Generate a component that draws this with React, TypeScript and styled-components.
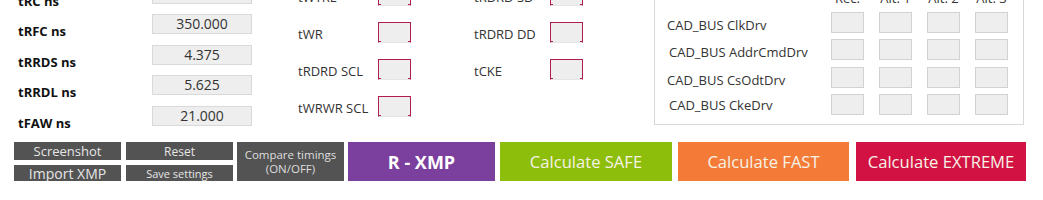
import { FunctionComponent } from "react";
import styled, { createGlobalStyle } from "styled-components";

const GlobalStyle = createGlobalStyle`
  html, body {
    margin: 0;
    padding: 0;
    background: #ffffff;
    overflow: hidden;
  }
  body {
    font-family: "Open Sans", "Noto Sans", "Liberation Sans", sans-serif;
    color: #333;
  }
`;

const Page = styled.div`
  width: 1043px;
  height: 200px;
  overflow: hidden;
  background: #fff;
`;

const Top = styled.div`
  display: flex;
  align-items: flex-start;
  height: 142px;
  overflow: hidden;
`;

/* left column: bold timings with values */
const MainTimings = styled.div`
  display: grid;
  grid-template-columns: 134px 100px;
  grid-auto-rows: 20px;
  row-gap: 10.4px;
  margin-left: 18px;
  margin-top: -16px;
`;

const BoldLabel = styled.div`
  align-self: end;
  margin-bottom: -5px;
  font-size: 13px;
  font-weight: 700;
  color: #111;
  line-height: 16px;
  white-space: nowrap;
`;

const ValueBox = styled.div`
  box-sizing: border-box;
  height: 20px;
  background: #eeeeee;
  border: 1px solid #d9d9d9;
  font-size: 14px;
  line-height: 18px;
  text-align: center;
  color: #333;
`;

/* middle columns: small timings with red boxes */
const SubTimings = styled.div<{ $gap: number; $label: number }>`
  display: grid;
  grid-template-columns: ${(p) => p.$label}px 33px;
  grid-auto-rows: 21px;
  row-gap: 16px;
  margin-left: ${(p) => p.$gap}px;
  margin-top: -15px;
  align-items: center;
`;

const Label = styled.div`
  font-size: 13px;
  color: #333;
  white-space: nowrap;
  line-height: 16px;
  margin-top: 3px;
`;

const RedBox = styled.div`
  box-sizing: border-box;
  height: 21px;
  width: 33px;
  background:
    linear-gradient(#b01d52, #b01d52) left bottom / 2px 1px no-repeat,
    linear-gradient(#b01d52, #b01d52) right bottom / 2px 1px no-repeat,
    #eeeeee;
  border: 1px solid #b01d52;
  border-bottom: 1px solid #e6e6e6;
`;

/* right panel: CAD_BUS drive strengths */
const Panel = styled.div`
  box-sizing: border-box;
  margin-left: 71px;
  margin-top: -12px;
  width: 370px;
  height: 137px;
  border: 1px solid #d8d8d8;
  padding: 2px 0 0 12px;
  display: grid;
  grid-template-columns: 149px repeat(4, 33px);
  grid-template-rows: 14px repeat(4, 21px);
  column-gap: 15px;
  row-gap: 6.6px;
  align-items: center;
  align-content: start;
`;

const ColHead = styled.div`
  font-size: 13px;
  color: #333;
  text-align: center;
  white-space: nowrap;
  line-height: 16px;
`;

const BusLabel = styled.div<{ $indent: number; $dy: number }>`
  font-size: 13px;
  color: #333;
  white-space: nowrap;
  padding-left: ${(p) => p.$indent}px;
  line-height: 16px;
  margin-top: ${(p) => p.$dy}px;
`;

const GreyBox = styled.div`
  box-sizing: border-box;
  height: 21px;
  background: #eeeeee;
  border: 1px solid #d2d2d2;
`;

/* bottom toolbar */
const Toolbar = styled.div`
  display: flex;
  align-items: flex-start;
  height: 39px;
  margin-left: 14px;
  overflow: hidden;
`;

const Stack = styled.div<{ $ml: number }>`
  display: flex;
  flex-direction: column;
  gap: 5px;
  width: 107px;
  margin-left: ${(p) => p.$ml}px;
`;

const SmallButton = styled.div<{ $h: number; $size: number }>`
  height: ${(p) => p.$h}px;
  background: #535353;
  color: #e6e6e6;
  font-size: ${(p) => p.$size}px;
  line-height: ${(p) => p.$h + 1}px;
  text-align: center;
  overflow: hidden;
  white-space: nowrap;
`;

const BigButton = styled.div<{ $w: number; $ml: number; $bg: string; $bold?: boolean }>`
  display: flex;
  align-items: center;
  justify-content: center;
  width: ${(p) => p.$w}px;
  height: 39px;
  margin-left: ${(p) => p.$ml}px;
  background: ${(p) => p.$bg};
  color: ${(p) => (p.$bold ? "#ffffff" : "#f6f2e6")};
  font-size: ${(p) => (p.$bold ? 18 : 16.6)}px;
  font-weight: ${(p) => (p.$bold ? 700 : 400)};
  white-space: nowrap;
`;

const CompareButton = styled.div`
  width: 107px;
  height: 39px;
  margin-left: 4px;
  background: #535353;
  color: #dedede;
  font-size: 11.5px;
  line-height: 14px;
  text-align: center;
  display: flex;
  flex-direction: column;
  justify-content: center;
`;

const mainTimings = [
  ["tRC ns", "45.750"],
  ["tRFC ns", "350.000"],
  ["tRRDS ns", "4.375"],
  ["tRRDL ns", "5.625"],
  ["tFAW ns", "21.000"],
];

const busRows = [
  { name: "CAD_BUS ClkDrv", indent: 0, dy: 6 },
  { name: "CAD_BUS AddrCmdDrv", indent: 2, dy: 4 },
  { name: "CAD_BUS CsOdtDrv", indent: 0, dy: 5 },
  { name: "CAD_BUS CkeDrv", indent: 2, dy: 1 },
];

const SubColumn: FunctionComponent<{ labels: string[]; gap: number; label: number }> = (props) => (
  <SubTimings $gap={props.gap} $label={props.label}>
    {props.labels.map((l) => [<Label key={l}>{l}</Label>, <RedBox key={l + "-box"} />])}
  </SubTimings>
);

export default function App() {
  return (
    <Page>
      <GlobalStyle />
      <Top>
        <MainTimings>
          {mainTimings.map(([name, value]) => [
            <BoldLabel key={name}>{name}</BoldLabel>,
            <ValueBox key={name + "-v"}>{value}</ValueBox>,
          ])}
        </MainTimings>
        <SubColumn labels={["tWTRL", "tWR", "tRDRD SCL", "tWRWR SCL"]} gap={46} label={80} />
        <SubColumn labels={["tRDRD SD", "tRDRD DD", "tCKE"]} gap={63} label={76} />
        <Panel>
          <div />
          <ColHead>Rec.</ColHead>
          <ColHead>Alt. 1</ColHead>
          <ColHead>Alt. 2</ColHead>
          <ColHead>Alt. 3</ColHead>
          {busRows.map((r) => [
            <BusLabel key={r.name} $indent={r.indent} $dy={r.dy}>{r.name}</BusLabel>,
            <GreyBox key={r.name + "1"} />,
            <GreyBox key={r.name + "2"} />,
            <GreyBox key={r.name + "3"} />,
            <GreyBox key={r.name + "4"} />,
          ])}
        </Panel>
      </Top>
      <Toolbar>
        <Stack $ml={0}>
          <SmallButton $h={18} $size={13}>Screenshot</SmallButton>
          <SmallButton $h={16} $size={14}>Import XMP</SmallButton>
        </Stack>
        <Stack $ml={5}>
          <SmallButton $h={18} $size={12}>Reset</SmallButton>
          <SmallButton $h={16} $size={11}>Save settings</SmallButton>
        </Stack>
        <CompareButton>
          <span>Compare timings</span>
          <span>(ON/OFF)</span>
        </CompareButton>
        <BigButton $w={147} $ml={4} $bg="#7b3f9d" $bold>R - XMP</BigButton>
        <BigButton $w={172} $ml={5} $bg="#8dbe0b">Calculate SAFE</BigButton>
        <BigButton $w={171} $ml={6} $bg="#f47b37">Calculate FAST</BigButton>
        <BigButton $w={170} $ml={7} $bg="#d31244">Calculate EXTREME</BigButton>
      </Toolbar>
    </Page>
  );
}
